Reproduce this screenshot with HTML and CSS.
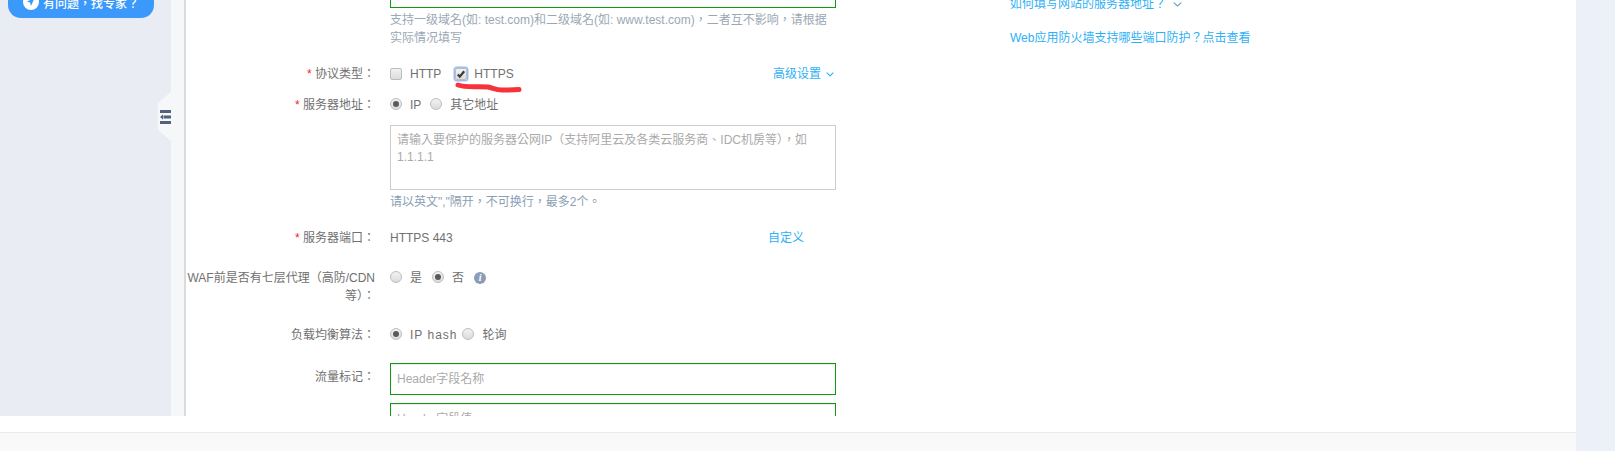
FILE: index.html
```html
<!DOCTYPE html>
<html>
<head>
<meta charset="utf-8">
<title>添加网站</title>
<link rel="stylesheet" href="styles.css">
</head>
<body>
<div class="page">
  <div class="shell">
    <div class="workspace">
      <aside class="sidebar">
        <button class="ask" type="button">
          <svg class="ask-icon" width="16" height="16" viewBox="0 0 16 16"><circle cx="8" cy="8" r="8" fill="#fff"/><path d="M11.5 4 4 7.5l3 1 1 3.5z" fill="#3b99fc"/></svg>
          <span>有问题，找专家？</span>
        </button>
      </aside>
      <div class="strip">
        <div class="handle">
          <svg width="11" height="14" viewBox="0 0 11 14"><path d="M0 0h11v3H0zM0 11h11v3H0zM3.5 5.5H11v3H3.5z" fill="#51627a"/><path d="M0 7l3-2.5v5z" fill="#51627a"/></svg>
        </div>
      </div>
      <main class="main">
        <form class="form">
          <div class="field">
            <div class="label"></div>
            <div class="control">
              <div class="input"></div>
              <p class="help">支持一级域名(如: test.com)和二级域名(如: www.test.com)，二者互不影响，请根据实际情况填写</p>
            </div>
          </div>

          <div class="field field-protocol">
            <div class="label"><em>*</em> 协议类型：</div>
            <div class="control line">
              <span class="check"></span><span class="opt opt-http">HTTP</span>
              <span class="check checked"><svg width="10" height="10" viewBox="0 0 10 10"><path d="M1.8 5.4 3.8 7.6 8.2 2.2" fill="none" stroke="#3a3a3a" stroke-width="2.2"/></svg></span><span class="opt opt-https">HTTPS</span>
              <a class="link advanced">高级设置<svg width="8" height="5" viewBox="0 0 8 5"><path d="M.7.7 4 4 7.3.7" fill="none" stroke="#2fb0f5" stroke-width="1.1"/></svg></a>
              <svg class="scribble" width="70" height="12" viewBox="0 0 70 12"><path d="M3 3c9 3 19 1 30 2 5 1 8 3 14 3 6 0 11 0 17-.5" fill="none" stroke="#f6323a" stroke-width="5" stroke-linecap="round"/></svg>
            </div>
          </div>

          <div class="field field-address">
            <div class="label"><em>*</em> 服务器地址：</div>
            <div class="control line">
              <span class="radio on"></span><span class="opt opt-ip">IP</span>
              <span class="radio"></span><span class="opt">其它地址</span>
            </div>
          </div>

          <div class="field field-area">
            <div class="label"></div>
            <div class="control">
              <div class="textarea">请输入要保护的服务器公网IP（支持阿里云及各类云服务商、IDC机房等），如1.1.1.1</div>
              <p class="hint">请以英文","隔开，不可换行，最多2个。</p>
            </div>
          </div>

          <div class="field field-port">
            <div class="label"><em>*</em> 服务器端口：</div>
            <div class="control line">
              <span>HTTPS 443</span>
              <a class="link custom">自定义</a>
            </div>
          </div>

          <div class="field field-waf">
            <div class="label label-wrap">WAF前是否有七层代理（高防/CDN等）：</div>
            <div class="control line line-top">
              <span class="radio"></span><span class="opt opt-yes">是</span>
              <span class="radio on"></span><span class="opt opt-no">否</span>
              <span class="info">i</span>
            </div>
          </div>

          <div class="field field-lb">
            <div class="label">负载均衡算法：</div>
            <div class="control line">
              <span class="radio on"></span><span class="opt opt-hash">IP hash</span>
              <span class="radio"></span><span class="opt">轮询</span>
            </div>
          </div>

          <div class="field field-flow">
            <div class="label label-flow">流量标记：</div>
            <div class="control">
              <div class="input ph">Header字段名称</div>
              <div class="input ph input-next">Header字段值</div>
            </div>
          </div>
        </form>
        <nav class="faq">
          <a class="link faq-item">如何填写网站的服务器地址？<svg width="9" height="5" viewBox="0 0 9 5"><path d="M.7.7 4.5 4 8.3.7" fill="none" stroke="#6aa0c8" stroke-width="1.1"/></svg></a>
          <a class="link faq-item">Web应用防火墙支持哪些端口防护？点击查看</a>
        </nav>
      </main>
    </div>
    <footer class="footer"></footer>
  </div>
  <div class="rail"></div>
</div>
</body>
</html>
```
FILE: styles.css
```css
* { box-sizing: border-box; }
html, body { margin: 0; padding: 0; height: 451px; overflow: hidden; background: #fff; }
body { font: 12px/20px "Liberation Sans", "Noto Sans CJK TC", sans-serif; color: #707070; }

.page { display: flex; height: 451px; }
.shell { flex: 1; min-width: 0; display: flex; flex-direction: column; }
.rail { width: 39px; background: #ecf1f9; }

.workspace { display: flex; height: 416px; overflow: hidden; background: #fff; }
.footer { margin-top: 16px; flex: 1; background: #f9f9f9; border-top: 1px solid #ececec; }

.sidebar { width: 171px; background: #e9edf3; flex: none; }
.ask { display: flex; align-items: center; gap: 4px; width: 146px; height: 32px; margin: -14px 0 0 8px; padding: 0 0 0 15px; border: 0; border-radius: 13px; background: #3b99fc; color: #fff; font: 500 12px "Liberation Sans", "Noto Sans CJK TC", sans-serif; }
.ask-icon { flex: none; }

.strip { position: relative; width: 15px; flex: none; background: #f6f7f9; border-right: 2px solid #d9dbde; }
.handle { position: absolute; left: -13px; top: 92px; width: 13px; height: 49px; background: #f6f7f9; clip-path: polygon(0 11px, 100% 0, 100% 100%, 0 38px); display: flex; align-items: center; justify-content: flex-end; }
.handle svg { flex: none; }

.main { flex: 1; display: flex; min-width: 0; }
.form { width: 651px; margin-top: -24px; flex: none; }
.faq { margin: -6px 0 0 173px; display: flex; flex-direction: column; gap: 14px; }
.faq-item { display: flex; align-items: center; gap: 7px; }

.field { display: flex; }
.label { width: 188px; margin-left: 1px; margin-right: 15px; flex: none; text-align: right; white-space: nowrap; }
.label em { color: #f5222d; font-style: normal; }
.label-wrap { white-space: normal; line-height: 18px; }
.label-flow { padding-top: 4px; }
.control { width: 446px; flex: none; }
.line { position: relative; display: flex; align-items: center; height: 20px; }
.line-top { height: 18px; }

.input { width: 446px; height: 32px; border: 1px solid #0d9a0d; background: #fff; box-shadow: inset 0 1px 1px rgba(0,0,0,.08); padding: 0 6px; line-height: 30px; }
.ph { color: #aaa; }
.input-next { margin-top: 8px; }
.help { margin: 3px 0 0; font-size: 12px; line-height: 18px; color: #9aa8b6; }
.hint { margin: 3px 0 0; line-height: 18px; color: #8a9fb3; }
.textarea { height: 65px; border: 1px solid #ccc; padding: 6px; line-height: 17px; color: #aaa; }

.field-protocol { margin-top: 17px; }
.field-address { margin-top: 11px; }
.field-area { margin-top: 10px; }
.field-port { margin-top: 17px; }
.field-waf { margin-top: 21px; }
.field-lb { margin-top: 20px; }
.field-flow { margin-top: 18px; }

.check { width: 12px; height: 12px; flex: none; border: 1px solid #bdbdbd; border-radius: 2px; background: linear-gradient(#f2f2f2, #dcdcdc); display: flex; align-items: center; justify-content: center; }
.check.checked { box-shadow: 0 0 0 1.5px #9dbcf0; margin-left: 14px; }
.radio { position: relative; width: 12px; height: 12px; flex: none; margin-top: -2px; border: 1px solid #bdbdbd; border-radius: 50%; background: linear-gradient(#f2f2f2, #dcdcdc); }
.radio.on::after { content: ""; position: absolute; inset: 2px; border-radius: 50%; background: #5a5a5a; }

.opt { margin-left: 8px; white-space: nowrap; }
.opt-https { margin-left: 7px; }
.opt-ip { margin-right: 9px; }
.opt-yes { margin-right: 10px; }
.opt-no { margin-right: 10px; }
.opt-hash { margin-right: 5px; letter-spacing: 1px; }

.link { color: #2fb0f5; white-space: nowrap; }
.advanced { position: absolute; left: 383px; top: 0; display: flex; align-items: center; gap: 5px; }
.custom { position: absolute; left: 378px; top: 0; }
.scribble { position: absolute; left: 65px; top: 18px; }

.info { width: 12px; height: 12px; flex: none; margin-top: -1px; border-radius: 50%; background: #8a9fb5; color: #fff; font: italic bold 10px/12px "Liberation Serif", serif; text-align: center; }
```
